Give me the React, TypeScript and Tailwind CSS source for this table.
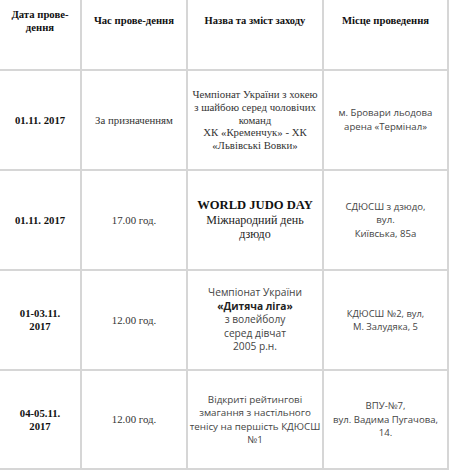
import React from "react";

const serif = "font-['Liberation_Serif','Times_New_Roman',serif]";
const sans = "font-['Open_Sans','Noto_Sans',sans-serif]";

type Row = {
  date: string[];
  time: string;
  event: React.ReactNode;
  place: React.ReactNode;
  h: string;
};

function Lines({ lines }: { lines: string[] }) {
  return (
    <>
      {lines.map((l, i) => (
        <div key={i} className="whitespace-nowrap">
          {l}
        </div>
      ))}
    </>
  );
}

const rows: Row[] = [
  {
    date: ["01.11. 2017"],
    time: "За призначенням",
    h: "h-[100px]",
    event: (
      <div className={`${serif} text-[10.8px] leading-[12.7px] text-[#333]`}>
        <Lines
          lines={[
            "Чемпіонат України з хокею",
            "з шайбою серед чоловічих",
            "команд",
            "ХК «Кременчук» - ХК",
            "«Львівські Вовки»",
          ]}
        />
      </div>
    ),
    place: (
      <div className={`${sans} text-[9.6px] leading-[14px] text-[#444]`}>
        <Lines lines={["м. Бровари льодова", "арена «Термінал»"]} />
      </div>
    ),
  },
  {
    date: ["01.11. 2017"],
    time: "17.00 год.",
    h: "h-[100px]",
    event: (
      <div className={`${serif} text-[#222]`}>
        <div className="whitespace-nowrap text-[12.6px] font-bold leading-[14.5px] text-[#111]">WORLD JUDO DAY</div>
        <div className="whitespace-nowrap text-[12px] leading-[14.5px]">Міжнародний день</div>
        <div className="whitespace-nowrap text-[12px] leading-[14.5px]">дзюдо</div>
      </div>
    ),
    place: (
      <div className={`${sans} text-[9.6px] leading-[13.5px] text-[#444]`}>
        <Lines lines={["СДЮСШ з дзюдо,", "вул.", "Київська, 85а"]} />
      </div>
    ),
  },
  {
    date: ["01-03.11.", "2017"],
    time: "12.00 год.",
    h: "h-[100px]",
    event: (
      <div className={`${sans} text-[10.2px] leading-[13.4px] text-[#444]`}>
        <div className="whitespace-nowrap">Чемпіонат України</div>
        <div className="whitespace-nowrap font-bold text-[#222]">«Дитяча ліга»</div>
        <div className="whitespace-nowrap">з волейболу</div>
        <div className="whitespace-nowrap">серед дівчат</div>
        <div className="whitespace-nowrap">2005 р.н.</div>
      </div>
    ),
    place: (
      <div className={`${sans} text-[9.4px] leading-[13.4px] text-[#444]`}>
        <Lines lines={["КДЮСШ №2, вул,", "М. Залудяка, 5"]} />
      </div>
    ),
  },
  {
    date: ["04-05.11.", "2017"],
    time: "12.00 год.",
    h: "h-[99px]",
    event: (
      <div className={`${sans} text-[9.8px] leading-[13.5px] text-[#444]`}>
        <Lines
          lines={[
            "Відкриті рейтингові",
            "змагання з настільного",
            "тенісу на першість КДЮСШ",
            "№1",
          ]}
        />
      </div>
    ),
    place: (
      <div className={`${sans} text-[9.6px] leading-[13.5px] text-[#444]`}>
        <Lines lines={["ВПУ-№7,", "вул. Вадима Пугачова,", "14."]} />
      </div>
    ),
  },
];

const cell = "flex items-center justify-center text-center border-r-2 border-b-2 border-[#d6d6d6] px-1";

export default function App() {
  return (
    <div className="w-[450px] h-[470px] overflow-hidden bg-white">
      <div className="-mt-[28px] grid grid-cols-[82px_106px_136px_125px]">
        <div className={`${cell} ${serif} h-[99px]`}>
          <div className="text-[10.7px] font-bold leading-[12.5px] text-[#111]">
            <div>Дата прове-</div>
            <div>дення</div>
          </div>
        </div>
        <div className={`${cell} ${serif} h-[99px]`}>
          <div className="whitespace-nowrap text-[10.7px] font-bold text-[#111]">Час прове-дення</div>
        </div>
        <div className={`${cell} ${serif} h-[99px]`}>
          <div className="whitespace-nowrap text-[10.5px] font-bold text-[#111]">Назва та зміст заходу</div>
        </div>
        <div className={`${cell} ${serif} h-[99px]`}>
          <div className="whitespace-nowrap text-[10.7px] font-bold text-[#111]">Місце проведення</div>
        </div>

        {rows.map((r, i) => (
          <React.Fragment key={i}>
            <div className={`${cell} ${serif} ${r.h}`}>
              <div className="text-[10.7px] font-bold leading-[13px] text-[#111]">
                {r.date.map((d, j) => (
                  <div key={j} className="whitespace-nowrap">
                    {d}
                  </div>
                ))}
              </div>
            </div>
            <div className={`${cell} ${serif} ${r.h}`}>
              <div className="whitespace-nowrap text-[10.8px] text-[#333]">{r.time}</div>
            </div>
            <div className={`${cell} ${r.h}`}>{r.event}</div>
            <div className={`${cell} ${r.h}`}>{r.place}</div>
          </React.Fragment>
        ))}
      </div>
    </div>
  );
}
